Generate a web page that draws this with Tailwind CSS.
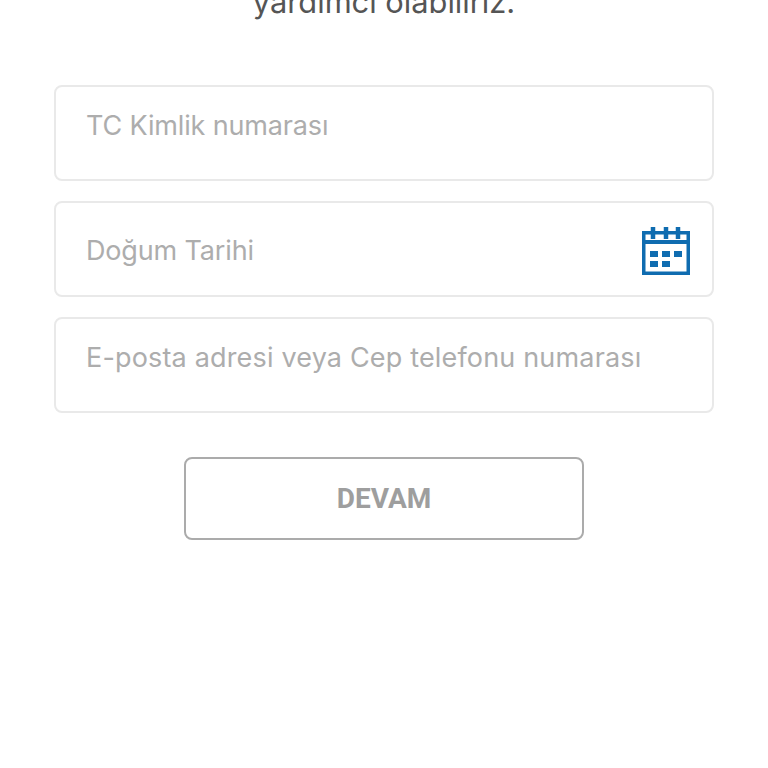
<!DOCTYPE html>
<html lang="tr">
<head>
  <meta charset="UTF-8" />
  <meta name="viewport" content="width=device-width, initial-scale=1.0" />
  <title>Devam</title>
  <script src="https://cdn.jsdelivr.net/npm/@tailwindcss/browser@4"></script>
</head>
<body class="bg-white h-[768px] overflow-hidden font-['Inter',sans-serif]">

  <h1 class="mt-[-16px] h-[36px] text-center text-[30.8px] leading-[36px] text-[#555555] font-normal">yardımcı olabiliriz.</h1>

  <main class="mt-[65px] px-[54px] flex flex-col gap-[20px]">
    <div class="h-[96px] border-2 border-[#e9e9e9] rounded-[8px] pl-[30px] pt-[21px] text-[27px] leading-[36px] tracking-[-0.15px] text-[#adadad]">TC Kimlik numarası</div>

    <div class="h-[96px] border-2 border-[#e9e9e9] rounded-[8px] pl-[30px] pr-[22px] pt-[3px] flex items-center justify-between text-[27px] leading-[36px] tracking-[-0.15px] text-[#adadad]">
      <span>Doğum Tarihi</span>
      <svg class="w-[48px] h-[48px]" viewBox="0 0 48 48" fill="none">
        <rect x="1.75" y="5.75" width="44.5" height="40.5" stroke="#0f6cb0" stroke-width="3.5" />
        <path d="M0 15h48" stroke="#0f6cb0" stroke-width="4" />
        <path d="M11 0v12M24 0v12M36 0v12" stroke="#0f6cb0" stroke-width="4.5" />
        <path d="M8 24h8v6H8zM20 24h8v6h-8zM32 24h8v6h-8zM8 34h8v6H8zM20 34h8v6h-8z" fill="#0f6cb0" />
      </svg>
    </div>

    <div class="h-[96px] border-2 border-[#e9e9e9] rounded-[8px] pl-[30px] pt-[21px] text-[27px] leading-[36px] tracking-[0.17px] text-[#adadad] whitespace-nowrap">E-posta adresi veya Cep telefonu numarası</div>

    <button class="mt-[24px] mx-auto w-[400px] h-[83px] border-2 border-[#ababab] rounded-[8px] bg-white text-[28px] font-bold text-[#9e9e9e] font-['Roboto',sans-serif]">DEVAM</button>
  </main>

</body>
</html>
